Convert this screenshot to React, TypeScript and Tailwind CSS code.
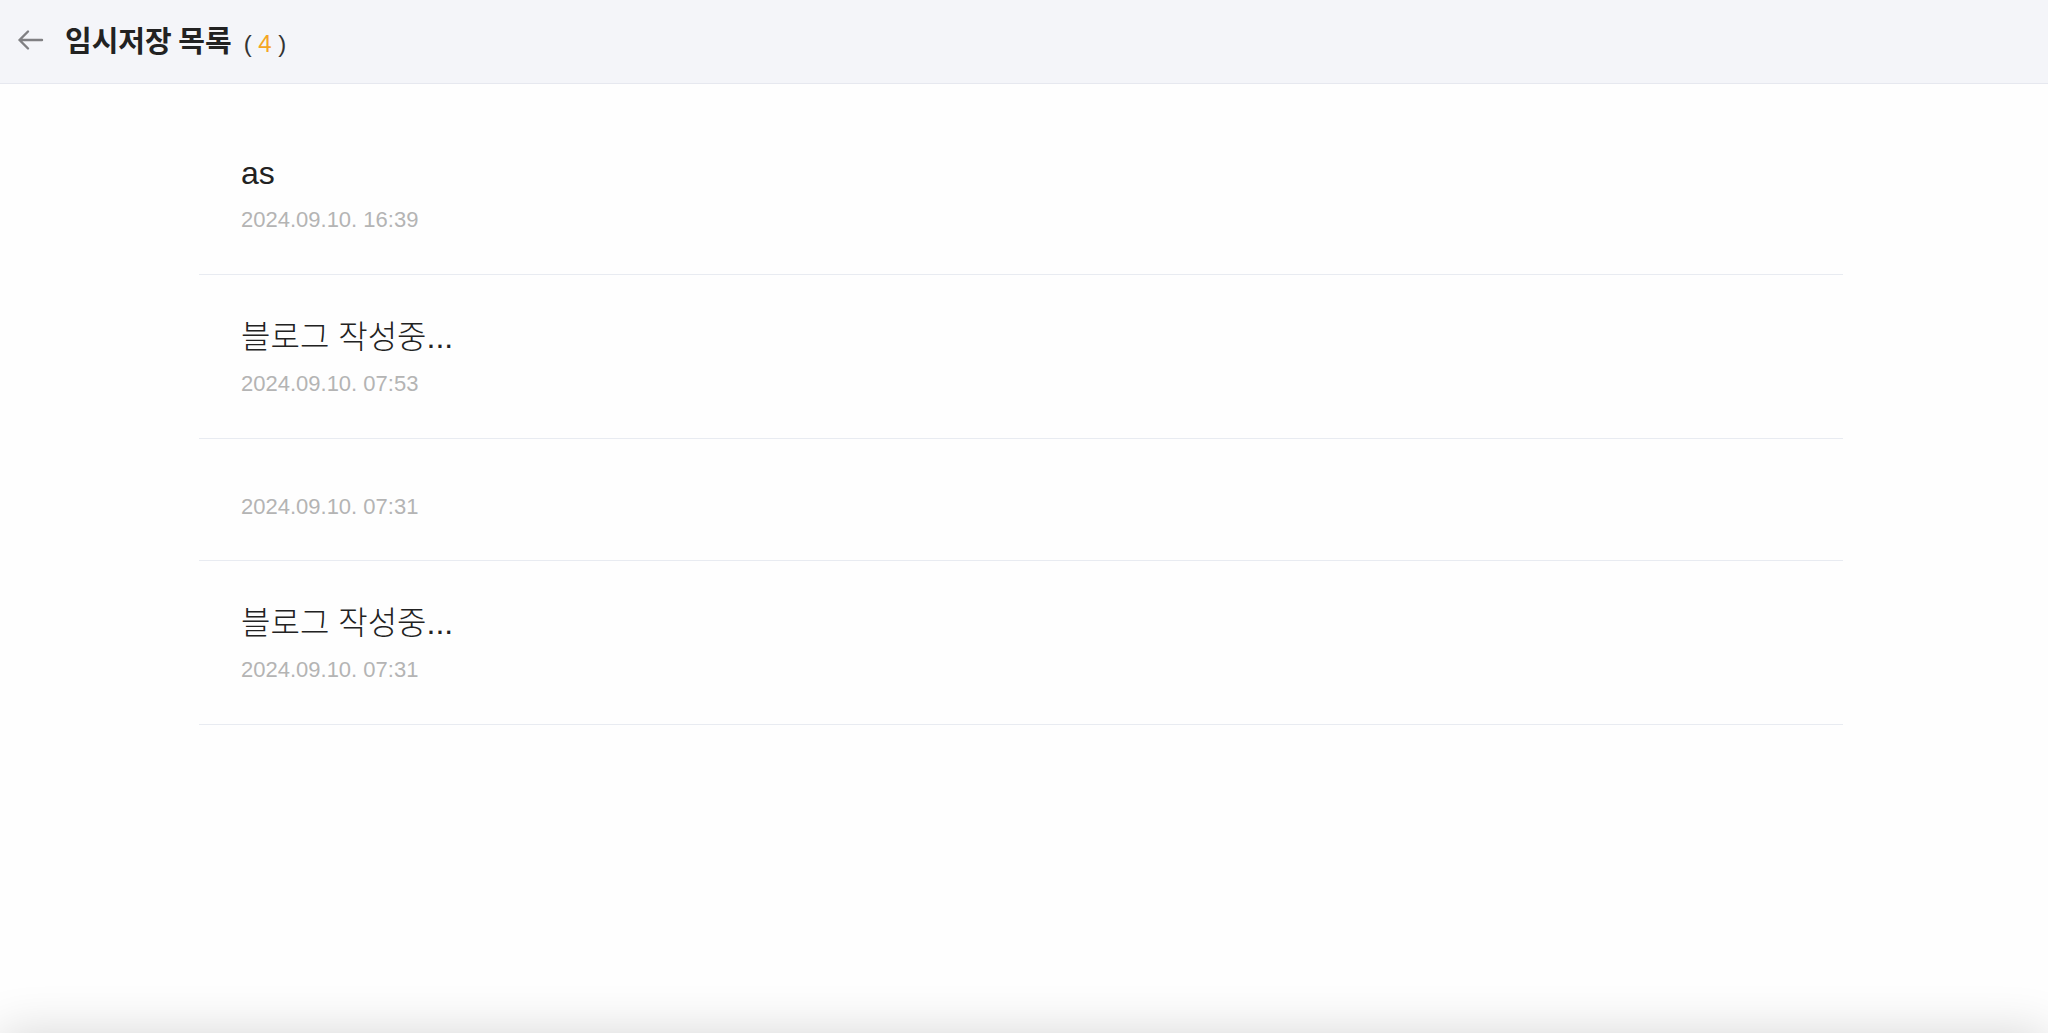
import React from 'react';

type Draft = {
  title: string;
  savedAt: string;
};

const drafts: Draft[] = [
  { title: 'as', savedAt: '2024.09.10. 16:39' },
  { title: '블로그 작성중...', savedAt: '2024.09.10. 07:53' },
  { title: '', savedAt: '2024.09.10. 07:31' },
  { title: '블로그 작성중...', savedAt: '2024.09.10. 07:31' },
];

const BackArrow = () => (
  <svg width="28" height="24" viewBox="0 0 28 24" fill="none" className="shrink-0">
    <path
      d="M26 12H3.5M12 3.5L3.5 12L12 20.5"
      stroke="#808083"
      strokeWidth="2.4"
      strokeLinecap="round"
      strokeLinejoin="round"
    />
  </svg>
);

const DraftRow = ({ draft }: { draft: Draft }) => (
  <li
    className={
      draft.title
        ? 'border-b border-[#e8ebf1] px-[42px] pt-[42px] pb-[39px]'
        : 'border-b border-[#e8ebf1] px-[42px] pt-[53px] pb-[38px]'
    }
  >
    {draft.title ? (
      <p className="mb-[12px] text-[32px] leading-[40px] font-light text-[#222222] font-['Liberation_Sans','Noto_Sans_CJK_KR',sans-serif]">
        {draft.title}
      </p>
    ) : null}
    <p className="text-[22px] leading-[30px] text-[#b4b4b4] font-['Liberation_Sans',sans-serif]">
      {draft.savedAt}
    </p>
  </li>
);

export default function App() {
  return (
    <div className="min-h-screen bg-[#fefefe]">
      <header className="flex h-[84px] items-center border-b border-[#e6e8ef] bg-[#f4f5f9] pb-[4px] pl-[16px]">
        <BackArrow />
        <h1 className="ml-[21px] flex items-baseline text-[29px] font-bold text-[#222222] font-['Noto_Sans_CJK_KR',sans-serif]">
          임시저장 목록
          <span className="ml-[12px] text-[24px] font-normal text-[#333333] font-['Liberation_Sans',sans-serif] whitespace-pre">
            ( <span className="text-[#f5a623]">4</span> )
          </span>
        </h1>
      </header>

      <main className="pt-[27px]">
        <ul className="ml-[199px] w-[1644px]">
          {drafts.map((draft, i) => (
            <DraftRow key={i} draft={draft} />
          ))}
        </ul>
      </main>

      {/* bottom bar sits just below the fold, only its shadow shows */}
      <div className="fixed inset-x-0 top-full h-20 bg-white shadow-[0_0_50px_rgba(0,0,0,0.16)]" />
    </div>
  );
}
